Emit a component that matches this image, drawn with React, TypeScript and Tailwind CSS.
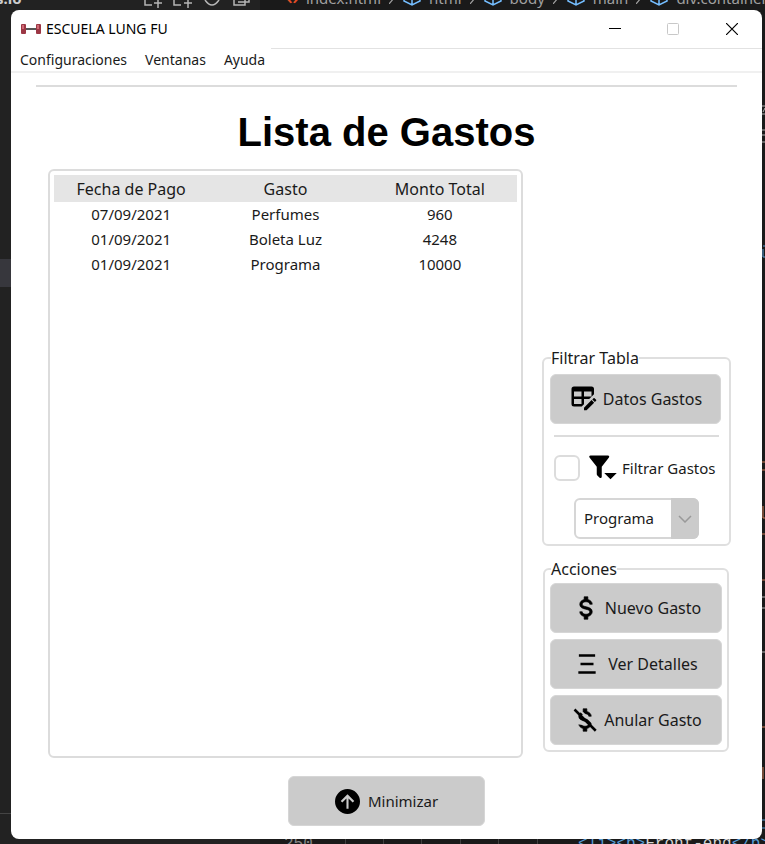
import { ReactNode } from "react";

const rows = [
  ["07/09/2021", "Perfumes", "960"],
  ["01/09/2021", "Boleta Luz", "4248"],
  ["01/09/2021", "Programa", "10000"],
];

const paths = {
  tableEdit:
    "M21.7 13.35L20.7 14.35L18.65 12.3L19.65 11.3C19.86 11.08 20.21 11.08 20.42 11.3L21.7 12.58C21.92 12.79 21.92 13.14 21.7 13.35M12 18.94L18.07 12.88L20.12 14.93L14.06 21H12V18.94M4 2H18A2 2 0 0 1 20 4V8.17L16.17 12H12V16.17L10.17 18H4A2 2 0 0 1 2 16V4A2 2 0 0 1 4 2M4 6V10H10V6H4M12 6V10H18V6H12M4 12V16H10V12H4Z",
  filterMenu:
    "M11 11L16.76 3.62A1 1 0 0 0 16.59 2.22A1 1 0 0 0 16 2H2A1 1 0 0 0 1.38 2.22A1 1 0 0 0 1.21 3.62L7 11V16.87A1 1 0 0 0 7.29 17.7L9.29 19.7A1 1 0 0 0 10.7 19.7A1 1 0 0 0 11 18.87V11M13 16L18 21L23 16Z",
  dollar:
    "M7 15H9C9 16.08 10.37 17 12 17C13.63 17 15 16.08 15 15C15 13.9 13.96 13.5 11.76 12.97C9.64 12.44 7 11.78 7 9C7 7.21 8.47 5.69 10.5 5.18V3H13.5V5.18C15.53 5.69 17 7.21 17 9H15C15 7.92 13.63 7 12 7C10.37 7 9 7.92 9 9C9 10.1 10.04 10.5 12.24 11.03C14.36 11.56 17 12.22 17 15C17 16.79 15.53 18.31 13.5 18.82V21H10.5V18.82C8.47 18.31 7 16.79 7 15Z",
  details: "M4.5 3H19.5V5.2H4.5ZM6 10.9H18V13.1H6ZM4 18.8H20V21H4Z",
  arrowCircle:
    "M12 0A12 12 0 1 1 12 24A12 12 0 1 1 12 0M11 9V19H13V9L17 13L18.5 11.5L12 5L5.5 11.5L7 13Z",
};

function Icon({ d, className = "size-[30px]" }: { d: string; className?: string }) {
  return (
    <svg viewBox="0 0 24 24" className={`${className} shrink-0`} fill="black" fillRule="evenodd" aria-hidden="true">
      <path d={d} />
    </svg>
  );
}

function DollarOffIcon() {
  return (
    <svg viewBox="0 0 24 24" className="size-[30px] shrink-0" aria-hidden="true">
      <path d={paths.dollar} stroke="black" strokeWidth="0.5" />
      <path d="M5.2 1.4L23 19.2" stroke="#cbcbcb" strokeWidth="1.6" />
      <path d="M3 9V15L10 16V13Z" fill="#cbcbcb" />
      <path d="M3.6 3.6L20.6 20.6" stroke="black" strokeWidth="2" />
    </svg>
  );
}

function ActionButton({ icon, className = "", children }: { icon: ReactNode; className?: string; children: ReactNode }) {
  return (
    <button
      type="button"
      className={`flex h-[50px] w-full items-center justify-center rounded-md border border-[#d6d6d6] bg-[#cbcbcb] whitespace-nowrap ${className}`}
    >
      {icon}
      {children}
    </button>
  );
}

function Cube() {
  return (
    <svg viewBox="0 0 18 16" className="h-4 w-[18px]" fill="none" stroke="#75beff" strokeWidth="1.5" aria-hidden="true">
      <path d="M1 4L9 1L17 4V11L9 15L1 11ZM1 4L9 8L17 4M9 8V15" />
    </svg>
  );
}

function Chevron() {
  return (
    <svg viewBox="0 0 6 12" className="h-3 w-[6px]" fill="none" stroke="#a0a0a0" strokeWidth="1.2" aria-hidden="true">
      <path d="M0 0L5 6L0 12" />
    </svg>
  );
}

function Backdrop() {
  return (
    <div className="absolute inset-0 overflow-hidden bg-[#1a1a1a]" aria-hidden="true">
      <div className="absolute inset-y-0 left-0 w-[260px] bg-[#222222]" />
      <div className="absolute top-[259px] left-0 h-7 w-3 bg-[#37373d]" />
      <div className="absolute top-[813px] left-0 h-px w-3 bg-[#444444]" />
      <div className="absolute -top-[12px] -left-1 text-[15px] leading-5 font-bold text-[#cccccc]">s.io</div>
      <svg className="absolute top-0 left-[140px] h-[10px] w-[120px]" fill="none" stroke="#b5b5b5" strokeWidth="1.5">
        <path d="M5 0V5H12M18 0V8M14 3H22M34 0V5H41M48 0V8M44 3H52M65 0Q72 10 79 0M94 0V5H105V0M98 2H109V-2" />
      </svg>
      <div className="absolute -top-[12px] left-[287px] flex items-center gap-2 text-[15px] leading-5 whitespace-nowrap text-[#a0a0a0]">
        <span className="font-bold text-[#e44d26]">‹›</span>
        <span>index.html</span>
        <Chevron />
        <Cube />
        <span>html</span>
        <Chevron />
        <Cube />
        <span>body</span>
        <Chevron />
        <Cube />
        <span>main</span>
        <Chevron />
        <Cube />
        <span>div.container.m</span>
      </div>
      <svg className="absolute top-0 right-0 h-[840px] w-[3px]" strokeWidth="1" fill="none">
        <path d="M0 106H3M1 112L3 108M0 114H3M0 130H3M0 135H3M0 142H3M0 597H3M0 608H3M0 652H3" stroke="#b0b0b0" />
        <path d="M1 246H3M1 249V257H3M0 820H3M0 828H3" stroke="#569cd6" />
        <path d="M0 462H3M0 470H3M1 506V518H3M0 534H3M0 580H3M0 727H3M1 767V779" stroke="#ce7a55" />
      </svg>
      <svg className="absolute top-[839px] left-[340px] h-[5px] w-[200px]" stroke="#404040">
        <path d="M5.5 0V5M43.5 0V5M81.5 0V5M120.5 0V5M158.5 0V5M197.5 0V5" />
      </svg>
      <div className="absolute top-[836px] left-[284px] font-['Liberation_Mono',monospace] text-base leading-4 text-[#858585]">
        250
      </div>
      <div className="absolute top-[834px] left-[578px] font-['Liberation_Mono',monospace] text-base leading-5 whitespace-nowrap text-[#569cd6]">
        &lt;li&gt;&lt;b&gt;<span className="text-[#d4d4d4]">Front-end</span>&lt;/b&gt;
      </div>
    </div>
  );
}

function Group({ title, className, children }: { title: string; className: string; children: ReactNode }) {
  return (
    <fieldset className={`min-w-0 rounded-md border-2 border-[#dfdfdf] ${className}`}>
      <legend className="ml-px h-7 text-base leading-7">{title}</legend>
      {children}
    </fieldset>
  );
}

export default function App() {
  return (
    <div className="relative min-h-screen font-['Noto_Sans','Open_Sans',sans-serif] text-[15px] text-[#1a1a1a]">
      <Backdrop />
      <div className="relative flex min-h-screen flex-col pt-[10px] pr-[3px] pb-[5px] pl-[11px]">
        <main className="flex grow flex-col rounded-lg bg-white">
          <header className="flex h-[38px] items-center pl-[10px] text-black">
            <svg viewBox="0 0 20 12" className="mr-[5px] h-3 w-5" aria-hidden="true">
              <path d="M4 5H16V7H4Z" fill="#555555" />
              <rect x="0" y="1" width="5" height="10" rx="1" fill="#9c3745" />
              <rect x="15" y="1" width="5" height="10" rx="1" fill="#9c3745" />
              <path d="M1 2H3V6H1ZM16 2H18V6H16Z" fill="#cf6a75" />
            </svg>
            <h2 className="text-sm">ESCUELA LUNG FU</h2>
            <div className="ml-auto flex">
              <button type="button" aria-label="Minimizar ventana" className="flex h-9 w-[58px] items-center justify-center">
                <svg className="size-3" viewBox="0 0 12 12" stroke="black"><path d="M0 5.5H12" /></svg>
              </button>
              <button type="button" aria-label="Maximizar" disabled className="flex h-9 w-[58px] items-center justify-center">
                <svg className="size-3" viewBox="0 0 12 12" fill="none" stroke="#c8c8c8"><rect x="0.5" y="0.5" width="11" height="11" rx="1" /></svg>
              </button>
              <button type="button" aria-label="Cerrar" className="flex h-9 w-[60px] items-center justify-center">
                <svg className="size-3" viewBox="0 0 12 12" stroke="black" strokeWidth="1.2"><path d="M0 0L12 12M12 0L0 12" /></svg>
              </button>
            </div>
          </header>
          <nav className="flex h-[25px] items-center gap-[18px] border-b-2 border-[#f0f0f0] pl-[9px] text-sm">
            <button type="button">Configuraciones</button>
            <button type="button">Ventanas</button>
            <button type="button">Ayuda</button>
            <span className="-ml-3 grow self-start border-t border-[#e2e2e2]" />
          </nav>
          <hr className="mt-3 mr-[25px] ml-[25px] border-t-2 border-[#dcdcdc]" />
          <h1 className="mt-5 text-center font-['Liberation_Sans',Arial,sans-serif] text-[40px] leading-[50px] font-bold text-black">
            Lista de Gastos
          </h1>
          <div className="mt-3 flex grow pr-[31px] pl-[37px]">
            <div className="grow rounded-md border-2 border-[#dcdcdc] p-1">
              <table className="w-full table-fixed text-center">
                <thead>
                  <tr className="h-[27px] bg-[#e5e5e5] text-base">
                    <th className="p-0 font-normal">Fecha de Pago</th>
                    <th className="p-0 font-normal">Gasto</th>
                    <th className="p-0 font-normal">Monto Total</th>
                  </tr>
                </thead>
                <tbody>
                  {rows.map((row, i) => (
                    <tr key={i} className="h-[25px]">
                      {row.map((cell) => (
                        <td key={cell} className="p-0">{cell}</td>
                      ))}
                    </tr>
                  ))}
                </tbody>
              </table>
            </div>
            <aside className="ml-[19px] flex w-[189px] shrink-0 flex-col justify-end gap-[9px] pb-[6px]">
              <Group title="Filtrar Tabla" className="px-[6px] pb-[5px]">
                <div className="pt-[2px] pr-[2px]">
                  <ActionButton icon={<Icon d={paths.tableEdit} />} className="gap-1 text-base">Datos Gastos</ActionButton>
                </div>
                <hr className="mx-1 mt-[11px] border-t-2 border-[#dcdcdc]" />
                <label className="mt-[17px] ml-1 flex h-7 items-center whitespace-nowrap">
                  <input type="checkbox" className="size-[26px] appearance-none rounded-md border-2 border-[#dcdcdc] bg-white" />
                  <span className="mr-1 ml-2"><Icon d={paths.filterMenu} /></span>
                  Filtrar Gastos
                </label>
                <div className="relative mx-auto mt-4 w-[125px]">
                  <select
                    aria-label="Gasto a filtrar"
                    className="h-[41px] w-full appearance-none rounded-md border-2 border-[#d6d6d6] bg-white pl-2"
                  >
                    <option>Programa</option>
                    <option>Perfumes</option>
                    <option>Boleta Luz</option>
                  </select>
                  <span className="pointer-events-none absolute inset-y-0 right-0 flex w-7 items-center justify-center rounded-r-md bg-[#cbcbcb]">
                    <svg viewBox="0 0 14 8" className="h-2 w-[14px]" fill="none" stroke="#999999" strokeWidth="1.5"><path d="M1 1L7 7L13 1" /></svg>
                  </span>
                </div>
              </Group>
              <Group title="Acciones" className="mr-[2px] ml-px px-[5px] pb-[5px]">
                <div className="flex flex-col gap-[6px]">
                  <ActionButton
                    icon={
                      <svg viewBox="0 0 24 24" className="size-[30px] shrink-0" aria-hidden="true">
                        <path d={paths.dollar} stroke="black" strokeWidth="0.5" />
                      </svg>
                    }
                    className="gap-1 text-base"
                  >
                    Nuevo Gasto
                  </ActionButton>
                  <ActionButton icon={<Icon d={paths.details} className="size-[26px]" />} className="gap-2 text-base">
                    Ver Detalles
                  </ActionButton>
                  <ActionButton icon={<DollarOffIcon />} className="gap-1 text-base">
                    Anular Gasto
                  </ActionButton>
                </div>
              </Group>
            </aside>
          </div>
          <footer className="mx-auto mt-[18px] mb-[13px] w-[197px]">
            <ActionButton icon={<Icon d={paths.arrowCircle} className="size-[25px]" />} className="gap-2">
              Minimizar
            </ActionButton>
          </footer>
        </main>
      </div>
    </div>
  );
}
